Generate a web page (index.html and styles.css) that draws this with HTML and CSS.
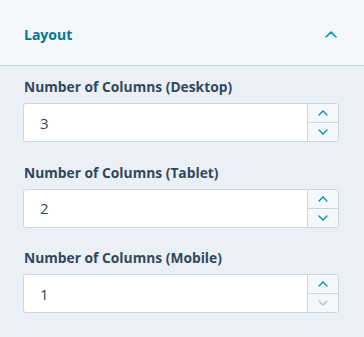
FILE: index.html
```html
<!DOCTYPE html>
<html lang="en">
<head>
    <meta charset="UTF-8">
    <title>Layout</title>
    <link rel="stylesheet" href="styles.css">
</head>
<body>

<div class="panel">
    <div class="panel-header">
        <span class="panel-title">Layout</span>
        <svg class="chevron" width="12" height="7" viewBox="0 0 12 7"><path d="M1 6 L6 1 L11 6" fill="none" stroke="#0091ae" stroke-width="1.6" stroke-linecap="round" stroke-linejoin="round"/></svg>
    </div>

    <div class="panel-body">
        <div class="field">
            <label class="field-label">Number of Columns (Desktop)</label>
            <div class="number-input">
                <span class="value">3</span>
                <div class="spinner">
                    <span class="spin-btn"><svg width="10" height="6" viewBox="0 0 10 6"><path d="M1 5 L5 1 L9 5" fill="none" stroke="#0091ae" stroke-width="1.3" stroke-linecap="round"/></svg></span>
                    <span class="spin-btn"><svg width="10" height="6" viewBox="0 0 10 6"><path d="M1 1 L5 5 L9 1" fill="none" stroke="#0091ae" stroke-width="1.3" stroke-linecap="round"/></svg></span>
                </div>
            </div>
        </div>

        <div class="field">
            <label class="field-label">Number of Columns (Tablet)</label>
            <div class="number-input">
                <span class="value">2</span>
                <div class="spinner">
                    <span class="spin-btn"><svg width="10" height="6" viewBox="0 0 10 6"><path d="M1 5 L5 1 L9 5" fill="none" stroke="#0091ae" stroke-width="1.3" stroke-linecap="round"/></svg></span>
                    <span class="spin-btn"><svg width="10" height="6" viewBox="0 0 10 6"><path d="M1 1 L5 5 L9 1" fill="none" stroke="#0091ae" stroke-width="1.3" stroke-linecap="round"/></svg></span>
                </div>
            </div>
        </div>

        <div class="field">
            <label class="field-label">Number of Columns (Mobile)</label>
            <div class="number-input">
                <span class="value">1</span>
                <div class="spinner">
                    <span class="spin-btn"><svg width="10" height="6" viewBox="0 0 10 6"><path d="M1 5 L5 1 L9 5" fill="none" stroke="#0091ae" stroke-width="1.3" stroke-linecap="round"/></svg></span>
                    <span class="spin-btn"><svg width="10" height="6" viewBox="0 0 10 6"><path d="M1 1 L5 5 L9 1" fill="none" stroke="#b0c1d4" stroke-width="1.3" stroke-linecap="round"/></svg></span>
                </div>
            </div>
        </div>
    </div>
</div>

</body>
</html>
```

FILE: styles.css
```css
body {
    margin: 0;
    font-family: 'Open Sans', 'Noto Sans', sans-serif;
    background-color: #eaf0f6;
    color: #33475b;
}

.panel-header {
    height: 66px;
    box-sizing: border-box;
    background-color: #f5f8fa;
    border-bottom: 1px solid #cbd6e2;
    display: flex;
    align-items: center;
    justify-content: space-between;
    padding: 4px 27px 0 24px;
}

.panel-title {
    font-size: 14px;
    font-weight: 700;
    color: #00798f;
}

.chevron {
    display: block;
}

.panel-body {
    padding: 11px 25px 0 23px;
    display: flex;
    flex-direction: column;
    gap: 20.5px;
}

.field {
    display: flex;
    flex-direction: column;
    gap: 6px;
}

.field-label {
    font-size: 13.8px;
    font-weight: 700;
    padding-left: 1px;
    line-height: 20px;
}

.number-input {
    height: 39px;
    box-sizing: border-box;
    background: #ffffff;
    border: 1px solid #cbd6e2;
    border-radius: 3px;
    display: flex;
    align-items: stretch;
}

.value {
    flex: 1;
    display: flex;
    align-items: center;
    padding-left: 16px;
    font-size: 15px;
}

.spinner {
    width: 30px;
    border-left: 1px solid #cbd6e2;
    background: #f5f8fa;
    display: flex;
    flex-direction: column;
    border-radius: 0 3px 3px 0;
}

.spin-btn {
    flex: 1;
    display: flex;
    align-items: center;
    justify-content: center;
}

.spin-btn + .spin-btn {
    border-top: 1px solid #cbd6e2;
}
```
